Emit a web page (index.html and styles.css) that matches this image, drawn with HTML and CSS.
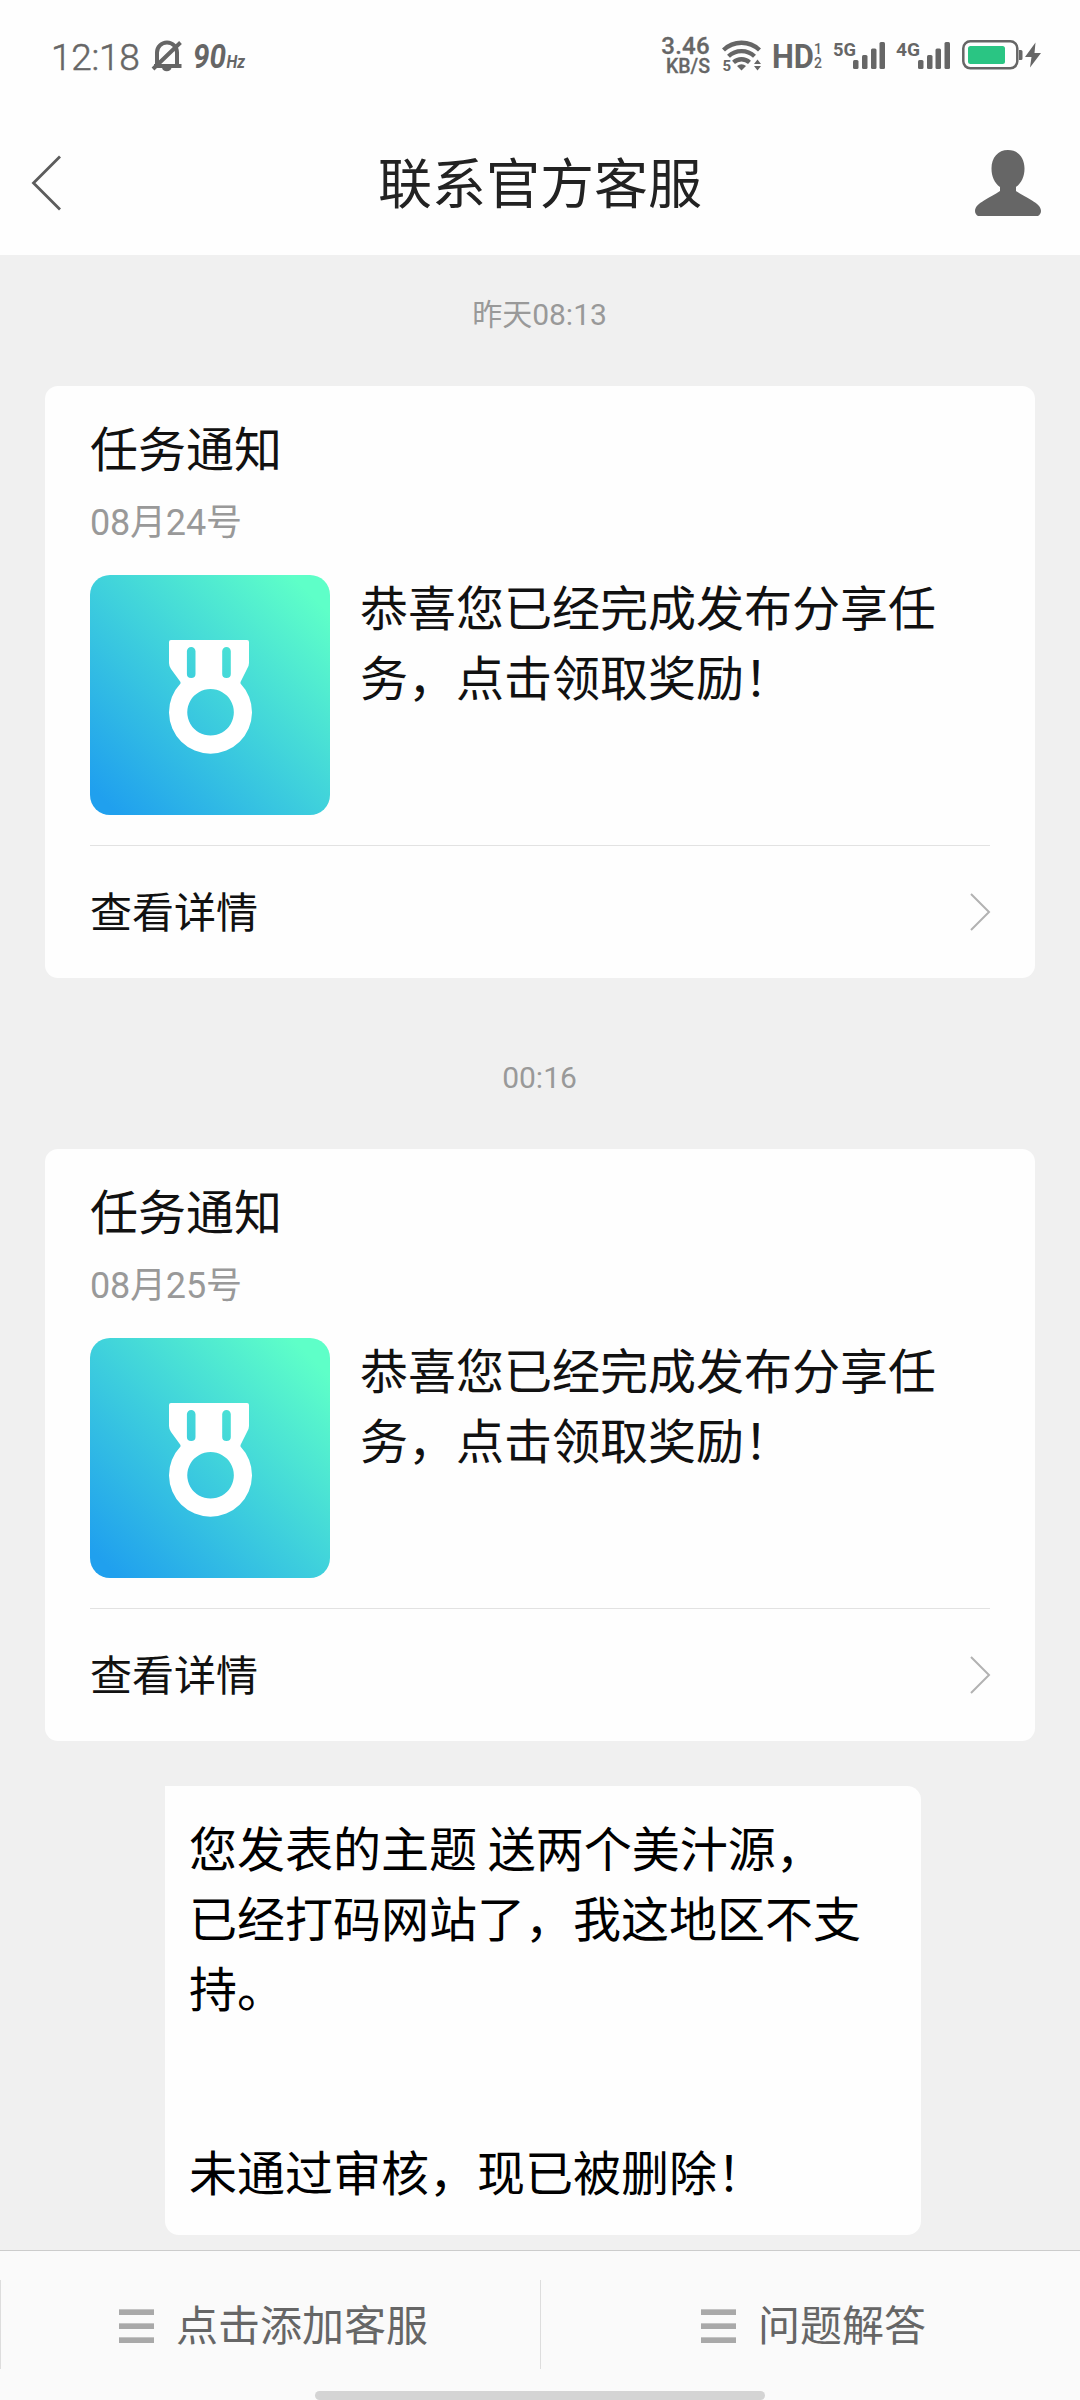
FILE: index.html
```html
<!DOCTYPE html>
<html lang="zh-CN">
<head>
<meta charset="utf-8">
<title>联系官方客服</title>
<link rel="stylesheet" href="styles.css">
</head>
<body>
<div class="screen">
  <div class="status">
    <span class="clock">12:18</span>
    <svg class="bell" width="32" height="34" viewBox="0 0 32 34">
      <path d="M6 27V12.500a9.700 9.700 0 0 1 20 0V27" fill="none" stroke="#666" stroke-width="4"/>
      <path d="M3 26h27.500M2 29L29.500 2.500" stroke="#666" stroke-width="4" fill="none"/>
      <path d="M11 27.500h9.500a4.800 4.400 0 0 1-9.500 0z" fill="#666"/>
    </svg>
    <svg class="hz" width="56" height="34" viewBox="0 0 56 34">
      <text class="label bold italic" x="1" y="28.500" font-size="34" textLength="33" lengthAdjust="spacingAndGlyphs">90</text>
      <text class="label bold italic" x="34.500" y="28.500" font-size="18" textLength="18.500" lengthAdjust="spacingAndGlyphs">Hz</text>
    </svg>
    <div class="status-right">
      <div class="speed"><span class="speed-num">3.46</span><span class="speed-unit">KB/S</span></div>
      <svg class="wifi" width="40" height="32" viewBox="0 0 40 32">
        <g fill="none" stroke="#666" stroke-width="4.300">
          <path d="M1.500 10a26 26 0 0 1 36 0"/>
          <path d="M6.500 16.300a19 19 0 0 1 26 0"/>
          <path d="M11.500 22.300a12 12 0 0 1 16 0"/>
        </g>
        <path d="M19.500 30.500l-4.500-4.500a7 7 0 0 1 9 0z" fill="#666"/>
        <path d="M32 24l3.500-4.500L39 24zM32 26l3.500 4.500L39 26z" fill="#666"/>
        <text class="label bold" x="0.500" y="30.500" font-size="15">5</text>
      </svg>
      <svg class="hd" width="52" height="32" viewBox="0 0 52 32">
        <text class="label bold" x="0" y="28" font-size="34" textLength="42" lengthAdjust="spacingAndGlyphs">HD</text>
        <text class="label medium" x="42" y="13.500" font-size="14">1</text>
        <text class="label medium" x="42" y="27.500" font-size="14">2</text>
      </svg>
      <svg class="signal" width="53" height="32" viewBox="0 0 53 32">
        <text class="label bold" x="0" y="16" font-size="18.500" textLength="23" lengthAdjust="spacingAndGlyphs">5G</text>
        <g fill="#666"><rect x="20" y="20" width="5.500" height="9" rx="1.500"/><rect x="29" y="15" width="5.500" height="14" rx="1.500"/><rect x="38" y="8.500" width="5.500" height="20.500" rx="1.500"/><rect x="46.500" y="2" width="5.500" height="27" rx="1.500"/></g>
      </svg>
      <svg class="signal second" width="54" height="32" viewBox="0 0 54 32">
        <text class="label bold" x="0" y="16" font-size="18.500" textLength="24" lengthAdjust="spacingAndGlyphs">4G</text>
        <g fill="#666"><rect x="22" y="20" width="5.500" height="9" rx="1.500"/><rect x="31" y="15" width="5.500" height="14" rx="1.500"/><rect x="39.500" y="8.500" width="5.500" height="20.500" rx="1.500"/><rect x="48.500" y="2" width="5.500" height="27" rx="1.500"/></g>
      </svg>
      <svg class="battery" width="81" height="32" viewBox="0 0 81 32">
        <rect x="1.300" y="1.300" width="54" height="27" rx="7" fill="none" stroke="#666" stroke-width="2.500"/>
        <rect x="6" y="6" width="37" height="18" rx="2.500" fill="#2ac583"/>
        <path d="M57 10h2a1.500 1.500 0 0 1 1.500 1.500v7a1.500 1.500 0 0 1-1.500 1.500h-2z" fill="#666"/>
        <path d="M73.500 2.500L63 17h6.500l-1.500 10.500L79 13h-6.500z" fill="#666"/>
      </svg>
    </div>
  </div>

  <div class="nav">
    <svg class="back" width="30" height="56" viewBox="0 0 30 56"><path d="M29 1.500L2.500 28 29 54.500" fill="none" stroke="#5c5c5c" stroke-width="2.800"/></svg>
    <h1 class="nav-title">联系官方客服</h1>
    <svg class="person" width="66" height="66" viewBox="0 0 66 66"><path d="M33 0C43 0 49.500 7.500 49.500 18.500c0 8-3 14.500-8.500 18.500v4c5 3.500 10.500 6 16 9.500 5 3 9 6 9 10.500 0 2.500-1.500 4-3 5H3c-1.500-1-3-2.500-3-5 0-4.500 4-7.500 9-10.500 5.500-3.500 11-6 16-9.500v-4c-5.500-4-8.500-10.500-8.500-18.500C16.500 7.500 23 0 33 0z" fill="#666"/></svg>
  </div>

  <div class="chat">
    <div class="time">昨天08:13</div>
    <div class="card">
      <div class="card-title">任务通知</div>
      <div class="card-date">08月24号</div>
      <div class="card-body">
        <svg class="thumb" width="240" height="240" viewBox="0 0 240 240">
          <defs><linearGradient id="tile" x1="0" y1="1" x2="1" y2="0"><stop offset="0.060" stop-color="#20a0ee"/><stop offset="0.500" stop-color="#3fd1dc"/><stop offset="0.920" stop-color="#5effc8"/></linearGradient></defs>
          <rect width="240" height="240" rx="20" fill="url(#tile)"/>
          <path fill="#fff" fill-rule="evenodd" d="M81 65h76q2 0 2 2v21q0 3-2 6l-6.500 13v1.500a41.500 41.500 0 1 1-60 0V107l-9.500-13q-2-3-2-6V67q0-2 2-2zM101.200 72a4.300 4.300 0 0 0-4.300 4.300V99q0 4 4.300 4t4.300-4V76.300a4.300 4.300 0 0 0-4.300-4.300zM136.500 72a4.300 4.300 0 0 0-4.300 4.300V99q0 4 4.300 4t4.300-4V76.300a4.300 4.300 0 0 0-4.300-4.300zM120.500 114a23.300 23.300 0 1 0 .1 0z"/>
        </svg>
        <p class="card-text">恭喜您已经完成发布分享任务，点击领取奖励！</p>
      </div>
      <div class="card-link"><span>查看详情</span><svg width="21" height="38" viewBox="0 0 21 38"><path d="M2 1l18 18L2 37" fill="none" stroke="#b2b2b2" stroke-width="2"/></svg></div>
    </div>

    <div class="time later">00:16</div>
    <div class="card">
      <div class="card-title">任务通知</div>
      <div class="card-date">08月25号</div>
      <div class="card-body">
        <svg class="thumb" width="240" height="240" viewBox="0 0 240 240">
          <rect width="240" height="240" rx="20" fill="url(#tile)"/>
          <path fill="#fff" fill-rule="evenodd" d="M81 65h76q2 0 2 2v21q0 3-2 6l-6.500 13v1.500a41.500 41.500 0 1 1-60 0V107l-9.500-13q-2-3-2-6V67q0-2 2-2zM101.200 72a4.300 4.300 0 0 0-4.300 4.300V99q0 4 4.300 4t4.300-4V76.300a4.300 4.300 0 0 0-4.300-4.300zM136.500 72a4.300 4.300 0 0 0-4.300 4.300V99q0 4 4.300 4t4.300-4V76.300a4.300 4.300 0 0 0-4.300-4.300zM120.500 114a23.300 23.300 0 1 0 .1 0z"/>
        </svg>
        <p class="card-text">恭喜您已经完成发布分享任务，点击领取奖励！</p>
      </div>
      <div class="card-link"><span>查看详情</span><svg width="21" height="38" viewBox="0 0 21 38"><path d="M2 1l18 18L2 37" fill="none" stroke="#b2b2b2" stroke-width="2"/></svg></div>
    </div>

    <div class="bubble">
      <p>您发表的主题 送两个美汁源，<br>已经打码网站了，我这地区不支持。</p>
      <p class="result">未通过审核，现已被删除！</p>
    </div>
  </div>

  <div class="menu">
    <div class="menu-item"><span class="lines"><i></i><i></i><i></i></span><span class="menu-label">点击添加客服</span></div>
    <div class="menu-item"><span class="lines"><i></i><i></i><i></i></span><span class="menu-label">问题解答</span></div>
    <div class="home"></div>
  </div>
</div>
</body>
</html>
```

FILE: styles.css
```css
* { box-sizing: border-box; }
body { margin: 0; }
h1, p { margin: 0; font-weight: 400; }
svg { display: block; flex: none; overflow: visible; }

.screen {
  width: 1080px;
  height: 2400px;
  overflow: hidden;
  display: flex;
  flex-direction: column;
  background: #f0f0f0;
  font-family: "Noto Sans CJK SC", sans-serif;
  color: #111;
}

/* status bar */
.status {
  height: 110px;
  flex: none;
  padding: 40px 37px 0 51px;
  display: flex;
  align-items: flex-start;
  background: #fefefe;
  font-family: Roboto, sans-serif;
  color: #666;
}
.clock { width: 100px; font-size: 37px; line-height: 36px; letter-spacing: -0.3px; font-weight: 300; -webkit-text-stroke: 0.5px #666; }
.hz { margin: -1px 0 0 9px; }
.label { font-family: Roboto, sans-serif; fill: #666; }
.medium { font-weight: 500; }
.bold { font-weight: 700; }
.italic { font-style: italic; }
.status-right { margin-left: auto; display: flex; align-items: flex-start; }
.speed { display: flex; flex-direction: column; align-items: flex-end; font-weight: 500; margin: -5px 12px 0 0; -webkit-text-stroke: 0.3px #666; }
.speed-num { font-size: 24px; line-height: 22px; letter-spacing: 0.3px; }
.speed-unit { font-size: 19.5px; line-height: 19px; }
.wifi { margin-right: 10px; }
.hd { margin-right: 9px; }
.signal { margin-right: 10px; }
.second { margin-right: 12px; }

/* title bar */
.nav {
  height: 145px;
  flex: none;
  padding: 0 39px 0 31px;
  display: grid;
  grid-template-columns: 66px 1fr 58px;
  align-items: center;
  background: #fefefe;
}
.nav-title { margin-bottom: 4px; font-size: 54px; line-height: 80px; text-align: center; color: #222; }
.person { justify-self: end; margin-top: 1px; }

/* conversation */
.chat { height: 1995px; flex: none; }
.time {
  height: 131px;
  padding: 40px 1px 0 0;
  text-align: center;
  font: 30px/40px Roboto, "Noto Sans CJK SC", sans-serif;
  color: #999;
}
.later { height: 171px; padding-top: 80px; }
.card { width: 990px; height: 592px; margin: 0 auto; padding: 24px 45px 0; border-radius: 13px; background: #fefefe; }
.card-title { height: 83px; font-size: 48px; line-height: 72px; }
.card-date { height: 82px; font: 36px/60px Roboto, "Noto Sans CJK SC", sans-serif; letter-spacing: -0.2px; color: #999; }
.card-body { height: 271px; display: flex; gap: 30px; border-bottom: 1px solid #e2e2e2; }
.card-text { width: 600px; margin-top: -5px; font-size: 48px; line-height: 70px; }
.card-link { height: 132px; display: flex; align-items: center; justify-content: space-between; font-size: 42px; line-height: 60px; }
.card-link span { padding-bottom: 5px; }

.bubble {
  width: 756px;
  height: 449px;
  margin: 45px 0 0 165px;
  padding: 25px 25px 0 24px;
  border-radius: 0 14px 14px 14px;
  background: #fefefe;
  color: #000;
  font-size: 48px;
  line-height: 70px;
}
.result { margin-top: 114px; }

/* bottom menu */
.menu {
  height: 150px;
  flex: none;
  display: flex;
  position: relative;
  padding: 29px 0 31px;
  border-top: 1px solid #ccc;
  background: #fafafa;
}
.menu-item {
  flex: 1;
  display: flex;
  align-items: center;
  justify-content: center;
  gap: 22px;
  padding-left: 6px;
  border-left: 1px solid #ddd;
  font-size: 42px;
  line-height: 60px;
  color: #666;
}
.menu-label { padding-bottom: 3px; }
.lines { display: flex; flex-direction: column; gap: 8px; margin-top: 2px; }
.lines i { width: 35px; height: 6px; background: #a9a9a9; border-top: 1px solid #c4c4c4; }
.home { position: absolute; left: 315px; bottom: 0; width: 450px; height: 9px; border-radius: 5px; background: #d4d4d4; }
</style>
```
